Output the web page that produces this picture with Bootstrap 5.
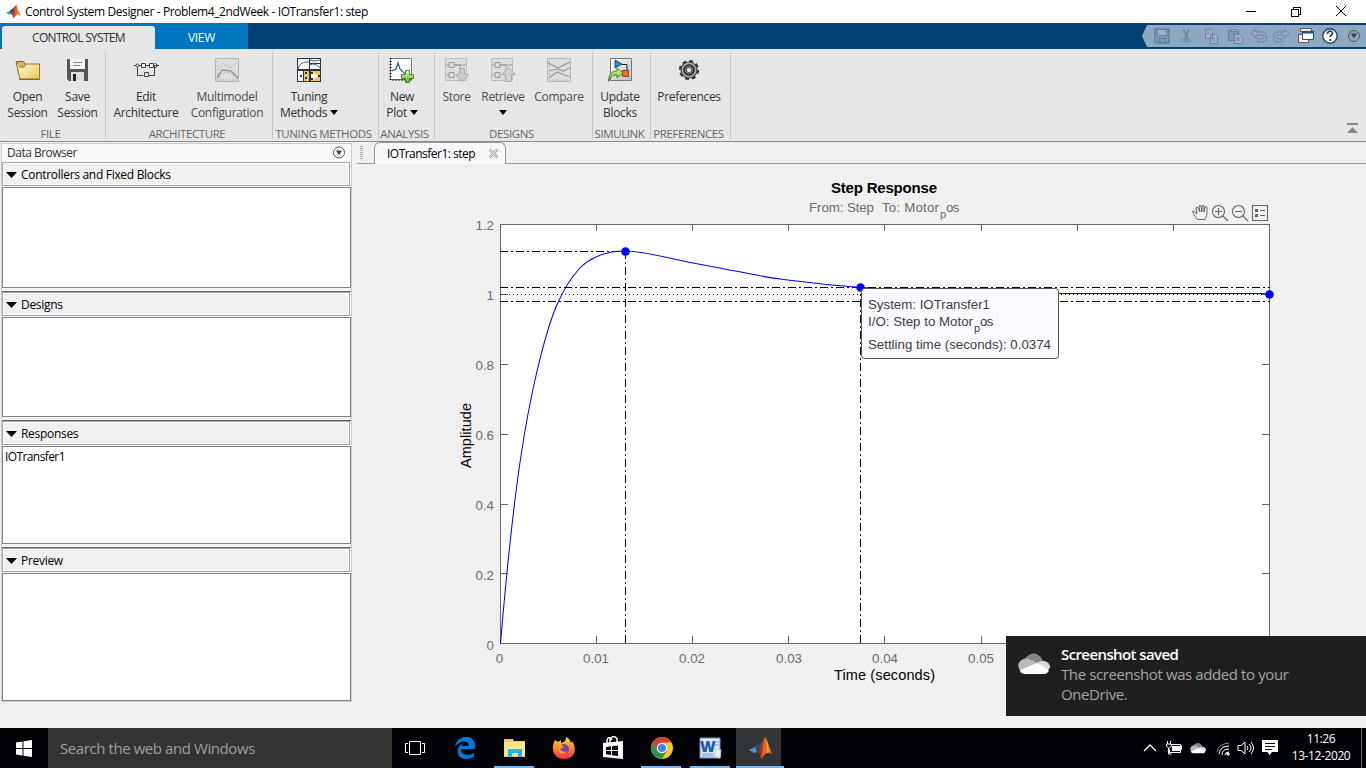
<!DOCTYPE html>
<html lang="en">
<head>
<meta charset="utf-8">
<title>Control System Designer</title>
<link href="https://cdn.jsdelivr.net/npm/bootstrap@5.3.0/dist/css/bootstrap.min.css" rel="stylesheet">
<style>
body{width:1366px;height:768px;overflow:hidden;background:#f0f0f0;font-family:"Open Sans","Noto Sans",sans-serif;font-size:12px;line-height:16px;letter-spacing:-.3px;color:#222}
svg{display:block;flex:none}
.titlebar{height:23px;color:#000;padding-left:6px}
.title-text{letter-spacing:-.39px;margin-left:4px}
.win-controls{gap:31px;padding-right:19px}
.tabbar{height:26px;background:#004073}
.rtab{font-size:12px}
.rtab-on{width:153px;margin-left:2px;height:23px;background:#e6e6e6;border-radius:3px 3px 0 0;color:#333;margin-top:3px;letter-spacing:-.7px}
.rtab-off{width:93px;height:26px;background:#0076c0;color:#fff;padding-top:3px}
.blue-start{background:#0076c0}
.ribbon{height:93px;background:#e6e6e6;border-bottom:1px solid #8c8c8c;padding-top:3px}
.rgroup{height:87px;border-right:1px solid #c6c6c6}
.rbtn{padding-top:5px;text-align:center;height:73px;color:#333}
.rbtn svg{margin:0 auto 6px}
.rbtn.dim{color:#4d4d4d}
.glabel{color:#666;text-align:center;padding-right:4px;white-space:nowrap;line-height:16px;font-size:11.5px;letter-spacing:-.4px;padding-top:1px}
.caret{display:inline-block;border:4px solid transparent;border-top:5px solid #000;border-bottom:0;vertical-align:2px;margin-left:0}
.w-file{width:106px}.w-arch{width:167px}.w-tune{width:106px}.w-ana{width:56px}.w-des{width:158px}.w-sim{width:58px}.w-pref{width:80px}
.workspace{height:586px}
.sidebar{width:351px;margin:1px 0 0 1px;height:559px;border:1px solid #ccc;background:#f4f4f4}
.sb-title{height:18px;background:#fafafa;color:#333;padding:0 8px 0 5px;letter-spacing:-.5px}
.sec-head{height:24px;border:1px solid #a5a5a5;box-shadow:inset 1px 1px #fff,inset -1px -1px #fff;background:#f0f0f0;margin:0 1px 1px 0;padding:2px 0 0 3px;color:#000;gap:4px}
.sec-gap{border-bottom:1px solid #666;height:4px}
.sec-list{border:1px solid #80858f;background:#fff;padding:2px 2px;color:#000;letter-spacing:-.6px}
.h1x{height:101px}.h2x{height:100px}.h3x{height:98px}.h4x{height:128px}
.tri{width:11px;height:6px;background:#000;clip-path:polygon(0 0,100% 0,50% 100%)}
.doc{margin-left:5px;width:1009px}
.docstrip{height:22px}
.strip-edge{border-bottom:1px solid #999}
.grip{width:3px;height:14px;background:repeating-linear-gradient(#aaa 0 1px,transparent 1px 2px);margin:4px 0 0 3px}
.doctab{width:132px;border:1px solid #999;border-bottom:0;border-radius:6px 6px 0 0;background:#f8f8fa;color:#000;padding:0 6px 0 12px;letter-spacing:-.52px}
.plot{font-family:"Liberation Sans",Arial,sans-serif;letter-spacing:0}
.toast-os{left:1006px;top:636px;width:360px;height:80px;background:#1f1f1f;padding:8px 12px;gap:11px;font-size:15px;line-height:20px;color:#a5a5a5;letter-spacing:-.4px}
.toast-os strong{color:#fff;font-weight:600;letter-spacing:-.6px}
.taskbar{height:40px;background:#020307;color:#fff}
.start{width:48px}
.search{width:344px;background:#333;color:#9f9f9f;font-size:15px;padding-left:12px;letter-spacing:-.42px}
.tbtn{width:49px;height:40px;position:relative}
.runs::after{content:"";position:absolute;left:4px;right:5px;bottom:0;height:2px;background:#76b9ed}
.activeapp{width:45px;margin-left:1px;background:#333437}
.activeapp::after{left:0;right:-3px}
.clock{text-align:center;width:74px;line-height:17px;letter-spacing:-.4px;padding-top:2px}
.peek{width:5px;border-left:1px solid #666;margin-left:3px}
</style>
</head>
<body>
<svg width="0" height="0" class="position-absolute">
<defs>
<linearGradient id="flame" x1="0" x2="1"><stop offset="0" stop-color="#7a1d18"/><stop offset=".45" stop-color="#d9411c"/><stop offset=".65" stop-color="#f5a02c"/><stop offset="1" stop-color="#b4301c"/></linearGradient>
<linearGradient id="folder" x1="0" x2="1" y2="1"><stop offset="0" stop-color="#fffde5"/><stop offset="1" stop-color="#e8c950"/></linearGradient>
<linearGradient id="pane" x2="1" y2="1"><stop stop-color="#fff"/><stop offset="1" stop-color="#bbb"/></linearGradient>
<linearGradient id="green" x2="0" y2="1"><stop stop-color="#e4ffa0"/><stop offset="1" stop-color="#5fa82c"/></linearGradient>
<symbol id="matlab" viewBox="0 0 24 22"><path d="M0 13 6 10 10 7 12 9 8 15 5 16Z" fill="#4b9bd0"/><path d="M6 10 10 7 16 1 12 10 8 15Z" fill="#274b6c"/><path d="M8 15C11 14 13 5 16 0 18 1 20 11 24 18 19 14 17 15 12 22 11 17 10 16 8 15Z" fill="url(#flame)"/><path d="M16 0C15 9 14 13 12 22 17 15 18 14 18 13Z" fill="#e66c24"/></symbol>
<symbol id="cloud" viewBox="0 0 32 21"><path d="M6 8C10-2 21-2 25 8L19 13Z" fill="#858585"/><path d="M3 18C-3 12 2 6 8 5.500 13 6 18 9 20 11L4 19Z" fill="#b9b9b9"/><path d="M19 10C23 6 33 8 32 15L28 18Z" fill="#d9d9d9"/><path d="M2 17 19 10 31 17C30 20 28 21 26 21H6C3 20 2 19 2 17Z" fill="#fff"/></symbol>
<symbol id="blocks" viewBox="0 0 26 26"><path d="M1.500 1.500h21v22h-21z" fill="#dedede" stroke="#bdbdbd"/><path d="M5 5.500h5v5H5zM5 15.500h5v5H5zM2 8h3m5 0h6v8M2 18h3m5-10h12" fill="none" stroke="#999"/></symbol>
<symbol id="lines" viewBox="0 0 26 26"><path d="M1.500 1.500h23v23h-23z" fill="#dedede" stroke="#b5b5b5"/><path d="M3 23h1m2 0h1m2 0h1m2 0h1m2 0h1m2 0h1m2 0h1M3 5h1M3 9h1M3 13h1M3 17h1" stroke="#999"/></symbol>
</defs></svg>

<header class="titlebar bg-white d-flex align-items-center">
<svg width="15" height="15"><use href="#matlab"/></svg><span class="title-text">Control System Designer - Problem4_2ndWeek - IOTransfer1: step</span>
<div class="win-controls d-flex ms-auto align-items-center">
<svg width="12" height="12" stroke="#000" fill="none"><path d="M1 5.500h10"/></svg>
<svg width="16" height="12" stroke="#000" fill="none" shape-rendering="crispEdges"><path d="M3.500 3.500h7v7h-7zM5.500 3V1.500h7v7H11"/></svg>
<svg width="12" height="12" stroke="#000" fill="none"><path d="m1 0 10 10M11 0 1 10"/></svg>
</div></header>

<nav class="tabbar d-flex">
<div class="blue-start d-flex"><div class="rtab rtab-on d-flex align-items-center justify-content-center">CONTROL SYSTEM</div><div class="rtab rtab-off d-flex align-items-center justify-content-center">VIEW</div></div>
<svg class="ms-auto mt-auto mb-auto" width="224" height="22" viewBox="1142 25 224 22" fill="none">
<path d="M1142 36 1147 25h219v22h-219Z" fill="#8da9c2"/>
<g stroke="#6682a0"><path d="M1155 29h14v14h-13l-1-1Z" fill="#7d98b2" stroke-width="1.500"/><path d="M1157.500 29.500h9v6h-9z" fill="#9bb3c8"/><path d="M1159.500 38.500h6v5h-6zM1161 40v3"/>
<path d="m1189 29-4 9m-2-9 5 9" stroke-width="1.300"/><circle cx="1183.500" cy="40.500" r="2"/><circle cx="1188" cy="40.500" r="2"/>
<path d="M1205.500 29.500h5l2 2v7h-7zM1210.500 34.500h5l2 2v7h-7zM1207 32h3m-3 2h2m3 4h3m-3 2h3" fill="#9fb5c9"/>
<path d="M1228.500 30.500h10v10h-10z" fill="#7e98b2"/><path d="M1231 29.500h5v2h-5zM1234.500 34.500h5l3 3v6h-8zM1236 38h4m-4 2h4" fill="#9fb5c9"/>
<path d="m1256 29-5 4.500 5 4.500v-3h6c3 0 3 4 0 4h-4v3h4c6 0 6-10 0-10h-6Z" fill="#95adc4"/><path d="m1284 29 5 4.500-5 4.500v-3h-6c-3 0-3 4 0 4h4v3h-4c-6 0-6-10 0-10h6Z" fill="#95adc4"/></g>
<path d="M1300.500 28.500h11v3h-11zM1298.500 34.500h10v8h-10z" fill="#eee" stroke="#62594f"/><path d="M1302.500 31.500h11v8h-11z" fill="#fff" stroke="#254c76"/><path d="M1302 32.500h12" stroke="#254c76" stroke-width="2"/>
<circle cx="1330" cy="36" r="7.200" fill="#fff" stroke="#254765" stroke-width="1.500"/><path d="M1327.500 34c0-4 5-3.500 5-.7 0 2-2.300 2-2.300 3.700m0 2v2" stroke="#254765" stroke-width="1.800"/>
<circle cx="1354" cy="36" r="5.500" stroke="#555"/><path d="M1350.500 33.500h7l-3.500 5Z" fill="#444"/>
</svg></nav>

<section class="ribbon d-flex">
<div class="rgroup w-file"><div class="d-flex">
<div class="rbtn" style="width:55px"><svg width="26" height="26"><path d="M1.500 4.500h7l2 3h14v15h-20Z" fill="#d8b65f" stroke="#7b612d"/><path d="M3 21V7l1 14V10h5l2-3h12v15H4Z" fill="url(#folder)"/><path d="M1 4.500 5 22h19.500V7H11L9 10H4" fill="url(#folder)" stroke="#8f7136"/></svg>Open<br>Session</div>
<div class="rbtn" style="width:45px"><svg width="26" height="26"><path d="M2 2h21v22H4l-2-2Z" fill="#555"/><path d="M5 2h15v10H5z" fill="#f4f4f4"/><path d="M8 5.500h9m-9 3h7" stroke="#888"/><path d="M6 15h13v9H6z" fill="#ddd"/><path d="M8 17h3v7H8z" fill="#222"/></svg>Save<br>Session</div></div><div class="glabel">FILE</div></div>
<div class="rgroup w-arch"><div class="d-flex">
<div class="rbtn" style="width:80px"><svg width="26" height="26" fill="none" stroke="#444"><path d="M1 8.500h7m4 0h4m4 0h6M4.500 9v9.500h6m4 0h7V9"/><path d="M8.500 6.500h4v4h-4zM16.500 6.500h4v4h-4zM11.500 15.500h4v4h-4z" fill="#eee"/><circle cx="4.500" cy="8.500" r="1.500" fill="#eee"/><path d="m22 6 3 2.500-3 2.500"/></svg>Edit<br>Architecture</div>
<div class="rbtn dim" style="width:82px"><svg width="26" height="26" fill="none"><use href="#lines" width="26" height="26"/><path d="m3 14 6-8 7 5 8-6M3 22l8-7 5 1 8 6" stroke="#c2c2c2"/><path d="m3 21 5-8 9 1 7 7" stroke="#999" stroke-width="1.500"/></svg>Multimodel<br>Configuration</div></div><div class="glabel">ARCHITECTURE</div></div>
<div class="rgroup w-tune"><div class="d-flex"><div class="rbtn" style="width:72px"><svg width="26" height="26"><path d="M1 1h24v24H1z" fill="#333"/><path d="M2 2h11v10H2zM14 2h10v4H14zM14 7h10v5H14z" fill="#f8f8f8"/><path d="M2 14h5v10H2zM8 14h5v10H8zM15 14h9v10h-9z" fill="#fff"/><path d="M8 14h5v10H8zM15 14l7 5-7 5h9V14z" fill="#f4c665"/><path d="M2 12C4 6 7 5 13 5M14 3l4 1 6-1m-10 5q5-3 10 3" fill="none" stroke="#2869aa"/><path d="M4 18h2v2H4zM9 15h2v2H9zM9 20h2v2H9zM15 15h2v2h-2zM15 21h2v2h-2zM22 18h2v2h-2z" fill="#153454"/></svg>Tuning<br>Methods <i class="caret"></i></div></div><div class="glabel">TUNING METHODS</div></div>
<div class="rgroup w-ana"><div class="d-flex"><div class="rbtn" style="width:46px"><svg width="26" height="26"><path d="M1.500 1.500h21v21h-21z" fill="#fff" stroke="#777"/><path d="M1.500 1v22H23" fill="none" stroke="#222" stroke-dasharray="1 2" stroke-width="2"/><path d="m3 14 4-2 2-6 2 6 4 4 6 2" stroke="#235e9a" fill="none" stroke-width="1.300"/><path d="M16.500 13.500h4v4h4v4h-4v4h-4v-4h-4v-4h4z" fill="url(#green)" stroke="#4d8429"/></svg>New<br>Plot <i class="caret"></i></div></div><div class="glabel">ANALYSIS</div></div>
<div class="rgroup w-des"><div class="d-flex">
<div class="rbtn dim" style="width:43px"><svg width="26" height="26"><use href="#blocks" width="26" height="26"/><path d="M15.500 11.500h5v6h4L18 24.500 11.500 17.500h4z" fill="#ccc" stroke="#aaa"/></svg>Store</div>
<div class="rbtn dim" style="width:50px"><svg width="26" height="26"><use href="#blocks" width="26" height="26"/><path d="M15.500 24.500h6v-7h4L18.500 10.500 12 17.500h3.500z" fill="#d2d2d2" stroke="#aaa"/></svg>Retrieve<br><i class="caret"></i></div>
<div class="rbtn dim" style="width:62px"><svg width="26" height="26" fill="none"><use href="#lines" width="26" height="26"/><path d="m2 6 10 5 12-6M3 14l8-2 6 2 7-3M3 21l8-6 5 2 8 3" stroke="#999" stroke-width="1.200"/></svg>Compare</div></div><div class="glabel">DESIGNS</div></div>
<div class="rgroup w-sim"><div class="d-flex"><div class="rbtn" style="width:54px"><svg width="26" height="26"><path d="M3.500 1.500h21v22h-21z" fill="url(#pane)" stroke="#777"/><path d="M14 7.500h6V14" stroke="#222" fill="none"/><path d="m8 3 7 4-7 4z" fill="#2786c5" stroke="#145277"/><path d="M15.500 13.500h6v6h-6z" fill="#ed6c31" stroke="#a73d17"/><path d="M1.500 24.500C2 17 5 14 10 14v-3l6 5-6 5v-3c-4 0-6 1-8.500 6.500Z" fill="url(#green)" stroke="#497e26"/></svg>Update<br>Blocks</div></div><div class="glabel">SIMULINK</div></div>
<div class="rgroup w-pref"><div class="d-flex"><div class="rbtn" style="width:76px"><svg width="26" height="26"><circle cx="13" cy="13" r="8.700" fill="none" stroke="#333" stroke-width="2.800" stroke-dasharray="3.830 3"/><circle cx="13" cy="13" r="8" fill="#aaa" stroke="#444" stroke-width="1.200"/><circle cx="13" cy="13" r="5" fill="#777" stroke="#222" stroke-width="1.500"/><circle cx="13" cy="13" r="2.600" fill="#eee" stroke="#555"/></svg>Preferences</div></div><div class="glabel">PREFERENCES</div></div>
<svg class="ms-auto align-self-end" style="margin:0 8px 7px 0" width="11" height="11"><path d="M0 0h11v2H0zM5.500 4 11 10H0Z" fill="#888"/></svg>
</section>

<main class="workspace d-flex">
<aside class="sidebar">
<div class="sb-title d-flex justify-content-between align-items-center"><span>Data Browser</span><svg width="13" height="14" style="margin-right:-3px"><circle cx="6" cy="6.500" r="5.500" fill="#fff" stroke="#555"/><path d="M3 4.500h6l-3 5Z" fill="#444"/></svg></div>
<div class="sec-head d-flex align-items-center"><i class="tri"></i>Controllers and Fixed Blocks</div><div class="sec-list h1x"></div><div class="sec-gap"></div>
<div class="sec-head d-flex align-items-center"><i class="tri"></i>Designs</div><div class="sec-list h2x"></div><div class="sec-gap"></div>
<div class="sec-head d-flex align-items-center"><i class="tri"></i>Responses</div><div class="sec-list h3x">IOTransfer1</div><div class="sec-gap"></div>
<div class="sec-head d-flex align-items-center"><i class="tri"></i>Preview</div><div class="sec-list h4x"></div>
</aside>
<div class="doc">
<div class="docstrip d-flex"><div class="strip-edge" style="width:17px"><div class="grip"></div></div><div class="doctab d-flex align-items-center justify-content-between"><span>IOTransfer1: step</span><svg width="11" height="11"><path d="m1.500 1.500 8 8m0-8-8 8" stroke="#aaa" stroke-width="2.600"/><path d="m2 2 7 7m0-7-7 7" stroke="#eee" stroke-width="1"/></svg></div><div class="strip-edge flex-grow-1"></div></div>
<svg class="plot" width="1009" height="564" viewBox="357 164 1009 564" fill="none">
<path d="M500.500 224.500h769v419h-769z" fill="#fff" stroke="#666" shape-rendering="crispEdges"/>
<path d="M596.500 643v-7m96 7v-7m96 7v-7m96 7v-7m97 7v-7M596.500 225v6m96-6v6m96-6v6m96-6v6m97-6v6m96-6v6m96-6v6M501 294.500h7m-7 70h7m-7 70h7m-7 70h7m-7 69h7M1269 294.500h-7m7 70h-7m7 70h-7m7 70h-7m7 69h-7" stroke="#666" shape-rendering="crispEdges"/>
<g stroke="#000" shape-rendering="crispEdges"><path d="M500 251.500h125M500 287.500h770M500 301.500h770M625.500 643V252M860.500 643V288" stroke-dasharray="8 3 2 3"/><path d="M501 294.500h768" stroke-dasharray="1 3"/></g>
<path d="M500.500 643.500C507.200 564.100 513.800 504.300 520.500 459S531.700 393.400 537.300 370C544 342 550.800 318.200 557.500 303.500S571.800 276.900 579 269 593 258 600 255.300 616.700 251 625 251C639 251.200 653 254.300 667 257.500S700.300 264.500 717 267.500 759 276.300 780 279 834 285.600 861 287.500C927 292 992 293.300 1058 293.500H1262L1270 294.500" stroke="#00f" stroke-width="1.050"/>
<g fill="#00f"><circle cx="625.500" cy="251.500" r="4.300"/><circle cx="860.500" cy="287.500" r="4.300"/><circle cx="1269.500" cy="294.500" r="4.300"/></g>
<g fill="#000" font-size="15"><text x="831" y="193" font-weight="bold" textLength="106">Step Response</text><text x="834" y="680" font-size="14.500" textLength="101">Time (seconds)</text><text transform="translate(471 468) rotate(-90)" font-size="14.500" textLength="65">Amplitude</text></g>
<g fill="#6b6b6b" font-size="13.300"><text x="809" y="212" textLength="65">From: Step</text><text x="882" y="212" textLength="57">To: Motor</text><text x="940" y="218" font-size="11">p</text><text x="946" y="212" textLength="13.500">os</text>
<g text-anchor="end"><text x="494" y="230">1.2</text><text x="494" y="300">1</text><text x="494" y="370">0.8</text><text x="494" y="440">0.6</text><text x="494" y="510">0.4</text><text x="494" y="580">0.2</text><text x="494" y="650">0</text></g>
<g text-anchor="middle"><text x="499.500" y="663">0</text><text x="596" y="663">0.01</text><text x="692" y="663">0.02</text><text x="789" y="663">0.03</text><text x="885" y="663">0.04</text><text x="981" y="663">0.05</text></g></g>
<g stroke="#666" stroke-width="1.100"><path d="m1197 219-4-6q-1-2.500 1-2l3 3-1-6q1-2 2 0l2 4-1-6q1-1 2 0l1 6v-6q1-2 2 0v6l1-5q1-1 2 0v6c0 4-2 5-2 6.500h-7z" stroke-width="1"/><circle cx="1218.500" cy="211.500" r="6"/><path d="m1223 216 5 5m-13-9.500h7m-3.500-3.500v7"/><circle cx="1238.500" cy="211.500" r="6"/><path d="m1243 216 5 5m-13-9.500h7M1252.500 205.500h15v15h-15zM1260 210.500h5m-5 5h5"/><path d="M1255 209h3v3h-3zM1255 214h3v3h-3z" fill="#666" stroke="none"/></g>
<rect x="861.500" y="288.500" width="197" height="70" rx="3" fill="#fafaff" stroke="#555"/>
<g fill="#404040" font-size="13.300"><text x="868" y="309" textLength="122">System: IOTransfer1</text><text x="868" y="326" textLength="105">I/O: Step to Motor</text><text x="974" y="332" font-size="11">p</text><text x="980" y="326" textLength="13.500">os</text><text x="868" y="349" textLength="183">Settling time (seconds): 0.0374</text></g>
</svg></div></main>

<footer class="taskbar d-flex">
<div class="start d-flex align-items-center justify-content-center"><svg width="16" height="17" fill="#fff"><path d="M0 2.500 6.500 1.500V8H0zM7.500 1.300 16 0v8H7.500zM0 9h6.500v6.500L0 14.500zM7.500 9H16v8l-8.500-1.300z"/></svg></div>
<div class="search d-flex align-items-center">Search the web and Windows</div>
<div class="tbtn d-flex align-items-center justify-content-center pe-1"><svg width="20" height="16" stroke="#fff" fill="none"><path d="M4.500 1.500h11v13h-11zM3 3.500H.5v9H3M17 3.500h2.500v9H17"/></svg></div>
<div class="tbtn d-flex align-items-center justify-content-center"><svg width="21" height="22"><path d="M0 10C2-3 20-4 20 9v3H6c0 7 8 7 13 4v4C9 25 1 20 3 12c1-4 4-5 6-6-2 2-2 2-2 3h7c0-6-9-6-14 1Z" fill="#0078d7"/></svg></div>
<div class="tbtn runs d-flex align-items-center justify-content-center"><svg width="22" height="20"><path d="M0 1h9l1 2h11v16H0z" fill="#f4c94e"/><path d="M0 4h21v14H0z" fill="#ffe68d"/><path d="M4 11h14v8h-4v-4H8v4H4z" fill="#20b5eb"/></svg></div>
<div class="tbtn d-flex align-items-center justify-content-center"><svg width="24" height="24"><defs><linearGradient id="fox" x2="0" y2="1"><stop stop-color="#ffdf3b"/><stop offset=".5" stop-color="#ff8b20"/><stop offset="1" stop-color="#ed2950"/></linearGradient></defs><path d="M3 4 6 6 9 4 9 7C12 6 14 5 14 1 18 3 18 5 19 7L20 5C25 12 24 23 12 23 2 23-2 14 3 4Z" fill="url(#fox)"/><circle cx="12" cy="13" r="5" fill="#7440b5"/><path d="M4 9q5-2 8 2l-4 2q3 4 7 2-3 5-8 1Z" fill="#ff9a21"/></svg></div>
<div class="tbtn d-flex align-items-center justify-content-center"><svg width="22" height="24"><path d="M1 7 21 5v18L1 21z" fill="#fff"/><path d="M5 9V4q2-5 5 0m-2 3V3q4-5 7 0v4" stroke="#fff" fill="none" stroke-width="1.500"/><path d="m4 11 5-.7V14H4zm6-.8 6-.7V14h-6zM4 15h5v4l-5-.7zm6 0h6v5l-6-.7z" fill="#020307"/></svg></div>
<div class="tbtn runs d-flex align-items-center justify-content-center"><svg width="22" height="22"><circle cx="11" cy="11" r="11" fill="#fbc928"/><path d="M1.500 5.500A11 11 0 0 1 20.500 5.500H11L6 14Z" fill="#d93e32"/><path d="M1.500 5.500A11 11 0 0 0 11 22l5-8H6Z" fill="#27964b"/><circle cx="11" cy="11" r="5.200" fill="#fff"/><circle cx="11" cy="11" r="4" fill="#4286ed"/></svg></div>
<div class="tbtn runs d-flex align-items-center justify-content-center"><svg width="23" height="23"><path d="M1 1h20v20H1z" fill="#dce8f7" stroke="#6792c7"/><path d="M15 5h5M15 8h5M3 17h12m-12 2h12" stroke="#7f9fc8"/><text x="1" y="15" font-family="Open Sans" font-weight="800" font-size="15" letter-spacing="0" fill="#1f59ab">W</text><path d="m16 12 6 1-1 8-5-1z" fill="#eee" stroke="#bcd"/></svg></div>
<div class="tbtn runs activeapp d-flex align-items-center justify-content-center"><svg width="24" height="22" class="ms-1"><use href="#matlab"/></svg></div>
<svg class="ms-auto" width="144" height="40" viewBox="1140 728 144 40" fill="none" stroke="#fff">
<path d="m1144 751 6-6 6 6" stroke-width="1.300"/><path d="M1170.500 744.500h10v8h-11v-3m11-4h1v4h-1M1167.500 741v3m3-3v3m-4 0h5v2l-2 2h-1l-2-2zm2 4v6h3"/><path d="M1172 746h8v5h-8z" fill="#fff" stroke="none"/>
<svg x="1190" y="742" width="16" height="12"><use href="#cloud" stroke="none"/></svg>
<path d="M1217 752q1-8 12-9" stroke="#888"/><path d="M1219 754q1-8 10-8m-7 9q0-6 7-6m-4 6q0-3 4-3"/><path d="M1227 753h2v2h-2z" fill="#fff"/>
<path d="M1238 745.500h3l4-3.500v12l-4-3.500h-3zM1247 746q2 2 0 4m2-6q4 4 0 8m2-10q5 6 0 12"/>
<path d="M1262 740h16v12h-6l-2.500 3-2-3H1262z" fill="#fff" stroke="none"/><path d="M1265 743.500h10m-10 3h10m-10 3h7" stroke="#000"/></svg>
<div class="clock">11:26<br>13-12-2020</div><div class="peek"></div>
</footer>

<div class="toast-os position-absolute d-flex"><svg width="32" height="21" style="margin-top:9px"><use href="#cloud"/></svg><div><strong>Screenshot saved</strong><br>The screenshot was added to your<br>OneDrive.</div></div>
<script src="https://cdn.jsdelivr.net/npm/bootstrap@5.3.0/dist/js/bootstrap.bundle.min.js"></script>
</body>
</html>
